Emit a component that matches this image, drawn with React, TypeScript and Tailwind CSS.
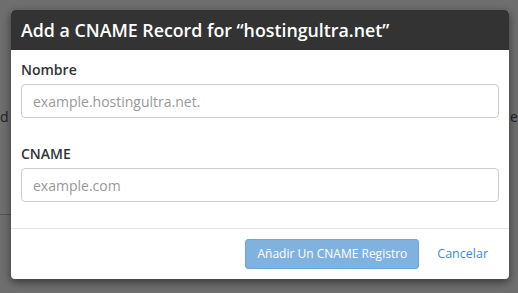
import React from "react";

const Field: React.FC<{ label: string; placeholder: string }> = ({ label, placeholder }) => (
  <div>
    <label className="block text-[14px] font-semibold leading-[20px] text-[#333]">{label}</label>
    <input
      type="text"
      placeholder={placeholder}
      className="mt-[4px] block h-[34px] w-full rounded-[4px] border border-[#ccc] bg-white px-[11px] text-[14px] text-[#555] placeholder:text-[#999] outline-none"
    />
  </div>
);

export default function App() {
  return (
    <div
      className="relative h-[293px] w-[518px] overflow-hidden bg-[#6e6e6e]"
      style={{ fontFamily: '"Open Sans", "Noto Sans", sans-serif' }}
    >
      {/* page behind the overlay */}
      <span className="absolute left-0 top-[106px] text-[14px] text-[#222]">d</span>
      <span className="absolute left-[510px] top-[106px] text-[14px] text-[#222]">e</span>
      <div className="absolute left-0 top-[214px] h-px w-[12px] bg-[#555]" />

      <div className="absolute left-[11px] top-[10px] w-[498px] overflow-hidden rounded-[4px] bg-white shadow-[0_3px_9px_rgba(0,0,0,0.5)]">
        <div className="flex h-[40px] items-center bg-[#333] px-[10px]">
          <h3 className="text-[17.8px] font-semibold text-white">Add a CNAME Record for “hostingultra.net”</h3>
        </div>

        <div className="flex flex-col gap-[26px] px-[10px] pb-[26px] pt-[10px]">
          <Field label="Nombre" placeholder="example.hostingultra.net." />
          <Field label="CNAME" placeholder="example.com" />
        </div>

        <div className="flex items-center justify-end gap-[6px] border-t border-[#e5e5e5] pb-[10px] pl-[10px] pr-[9px] pt-[10px]">
          <button className="h-[30px] rounded-[3px] border border-[#6fa5d6] bg-[#80b2e0] px-[11px] text-[12px] text-white">
            Añadir Un CNAME Registro
          </button>
          <button className="h-[30px] px-[12px] text-[12.5px] text-[#428bca]">Cancelar</button>
        </div>
      </div>
    </div>
  );
}
